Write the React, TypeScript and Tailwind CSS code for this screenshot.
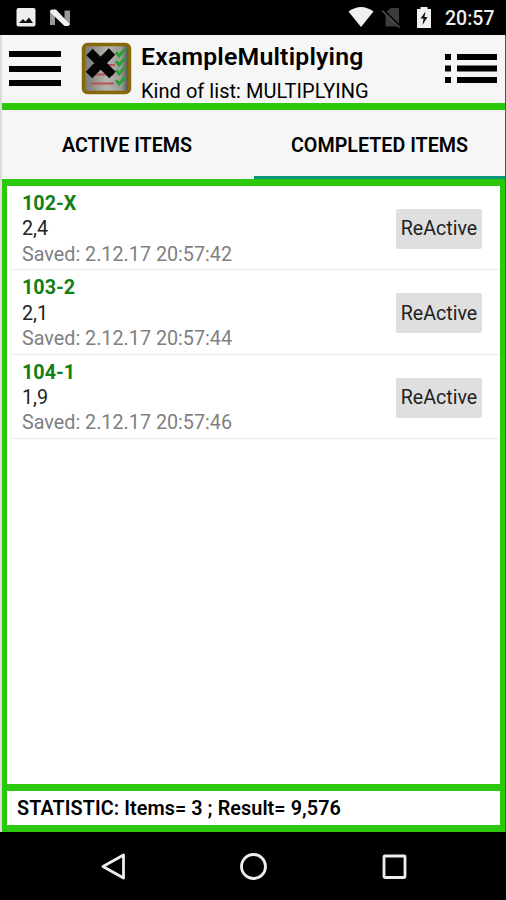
import * as React from "react";

const ITEMS = [
  { name: "102-X", value: "2,4", saved: "2.12.17 20:57:42" },
  { name: "103-2", value: "2,1", saved: "2.12.17 20:57:44" },
  { name: "104-1", value: "1,9", saved: "2.12.17 20:57:46" },
];

export default function App() {
  const [tab, setTab] = React.useState<"active" | "completed">("completed");

  return (
    <div className="w-[506px] h-[900px] flex flex-col overflow-hidden bg-black font-['Roboto',sans-serif] text-black whitespace-nowrap">
      <StatusBar />
      <div className="h-[797px] flex flex-col border-l-2 border-r border-l-[#dcdcdc] border-r-[#4a5a4a] bg-[#f6f6f6]">
        <Header />

        {/* Tabs */}
        <div className="h-[69px] shrink-0 grid grid-cols-[252px_251px]">
          <button onClick={() => setTab("active")} className="flex items-center justify-center border-b-[3px] border-transparent pt-[5px] pr-[2px] text-[19.7px] font-semibold">
            ACTIVE ITEMS
          </button>
          <button onClick={() => setTab("completed")} className="flex items-center justify-center border-b-[3px] border-[#0a9678] pt-[5px] text-[19.7px] font-semibold">
            COMPLETED ITEMS
          </button>
        </div>

        {/* List */}
        <div className="flex-1 bg-white border-x-[5px] border-t-[7px] border-[#2bc80c]">
          {tab === "completed" && ITEMS.map((item) => <Row key={item.name} item={item} />)}
        </div>
        <div className="h-[48px] shrink-0 bg-white border-x-[5px] border-y-[7px] border-[#2bc80c] pl-[10px] pt-[2px] flex items-center text-[19.8px] font-semibold tracking-[0.08px]">
          STATISTIC: Items= 3 ; Result= 9,576
        </div>
      </div>
      <NavBar />
    </div>
  );
}

function StatusBar() {
  return (
    <div className="h-[35px] shrink-0 flex items-center text-[#eee]">
      <svg width="90" height="35" viewBox="0 0 90 35">
        <rect x="16.5" y="8" width="19" height="18.5" rx="2" fill="#eee" />
        <path d="M19 23l4-4 2.500 2.500 3.500-4 4 5.500z" fill="#111" />
        <path d="M50 11l5-1v15h-5zM64.500 10.500h5.500V24l-5.500-1z" fill="#999" />
        <path d="M50 11.500q0-2 2.500-2h3.500L70 24.500q-1 1.500-3 1.500h-2.500L50 12z" fill="#f2f2f2" />
      </svg>
      <svg className="ml-auto" width="100" height="35" viewBox="340 0 100 35">
        <path d="M348.500 11.500q12.500-9 25 0L361 27z" fill="#f0f0f0" />
        <path d="M385.500 13l5-5H399v18.500h-13.500z" fill="#3c3c3c" />
        <path d="M382.500 9.500L400 27" stroke="#000" strokeWidth="3" />
        <path d="M382 10.500L399.500 27.500" stroke="#555" strokeWidth="1.500" />
        <path d="M417 9h3.500V7h7v2h3.500v19h-14z" fill="#f0f0f0" />
        <path d="M425.500 11.500l-5 7h3l-1 6.500 5-8h-3z" fill="#111" />
      </svg>
      <span className="ml-[5px] w-[61px] pt-[2px] text-[19.500px] font-medium leading-none">20:57</span>
    </div>
  );
}

function Header() {
  return (
    <header className="h-[75px] shrink-0 flex items-start border-b-[7px] border-[#2bc80c]">
      <button className="mt-[16px] ml-[7px] flex flex-col gap-[8.500px]">
        <span className="block h-[6px] w-[52px] bg-black" />
        <span className="block h-[6px] w-[52px] bg-black" />
        <span className="block h-[6px] w-[52px] bg-black" />
      </button>
      <AppIcon />
      <div className="ml-[9px] flex-1">
        <h1 className="mt-[6px] h-[31px] text-[24.800px] leading-[31px] font-semibold tracking-[0.2px]">ExampleMultiplying</h1>
        <p className="mt-[6px] text-[20px] leading-[26px] tracking-[0.04px]">Kind of list: MULTIPLYING</p>
      </div>
      <svg className="mt-[18px] mr-[8px] shrink-0" width="52" height="31" viewBox="0 0 52 31">
        <path d="M0 1h6v6H0zM12 1h40v6H12zM0 12.500h6v6H0zM12 12.500h40v6H12zM0 24h6v6H0zM12 24h40v6H12z" />
      </svg>
    </header>
  );
}

function AppIcon() {
  return (
    <svg className="mt-[7px] ml-[20px] shrink-0" width="51" height="53" viewBox="81 42 51 53">
      <defs>
        <linearGradient id="paper">
          <stop offset="0" stopColor="#77776d" />
          <stop offset="0.500" stopColor="#b5b3ad" />
          <stop offset="0.820" stopColor="#9c9c96" />
          <stop offset="1" stopColor="#424440" />
        </linearGradient>
      </defs>
      <rect x="83.500" y="44.500" width="46" height="48" rx="4" fill="url(#paper)" stroke="#86680f" strokeWidth="3.500" />
      <path d="M91 65h24M91 74.500h23M91 83.500h23" stroke="#b65355" strokeWidth="2" />
      <path d="M116 52l3 4 6-7M116 61l3 4 6-7M116 70l3 4 6-7M116 80l3 4 6-7" fill="none" stroke="#27a136" strokeWidth="2.800" />
      <path d="M89.500 52l23 23M112 51.500l-23 23.500" stroke="#050505" strokeWidth="9" />
    </svg>
  );
}

function Row({ item }: { item: (typeof ITEMS)[number] }) {
  return (
    <div className="ml-[4px] h-[84.400px] pt-[5px] pl-[11px] pr-[18px] flex justify-between border-b border-[#ececec]">
      <div className="text-[19.750px] leading-[25.300px]">
        <div className="font-bold text-[#128012]">{item.name}</div>
        <div className="text-[#222]">{item.value}</div>
        <div className="text-[#808080]">Saved: {item.saved}</div>
      </div>
      <button className="mt-[18px] h-[40px] w-[86px] rounded-[2px] bg-[#dfdfdf] text-[19.600px] text-[#222]">ReActive</button>
    </div>
  );
}

function NavBar() {
  return (
    <nav className="h-[68px] shrink-0">
      <svg width="506" height="68" viewBox="0 832 506 68" fill="none" stroke="#eee" strokeWidth="2.800">
        <path d="M123.500 855v23L103 866.500z" strokeLinejoin="round" />
        <circle cx="253.500" cy="866.500" r="12" />
        <rect x="384" y="856" width="21" height="21.500" rx="1" />
      </svg>
    </nav>
  );
}
